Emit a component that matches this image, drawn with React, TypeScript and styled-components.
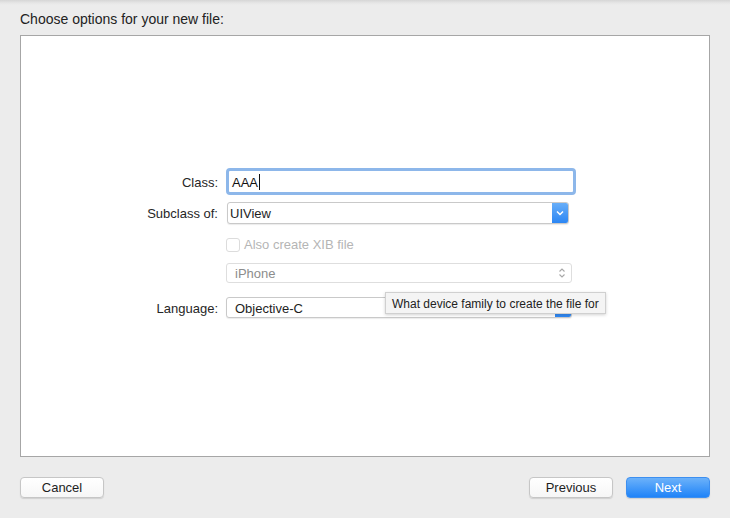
import styled, { createGlobalStyle } from 'styled-components';

const GlobalStyle = createGlobalStyle`
  html, body {
    margin: 0;
    padding: 0;
    background: #ececec;
  }
  body {
    font-family: 'Liberation Sans', Arial, sans-serif;
    font-size: 13px;
    color: #262626;
  }
`;

const Sheet = styled.div`
  width: 730px;
  height: 518px;
  box-sizing: border-box;
  display: flex;
  flex-direction: column;
  background: linear-gradient(#d6d6d6 0, #e6e6e6 3px, #ececec 5px);
  padding: 0 20px;
`;

const Title = styled.div`
  height: 35px;
  line-height: 39px;
  font-size: 14px;
  color: #222;
`;

const Panel = styled.div`
  height: 422px;
  box-sizing: border-box;
  background: #fff;
  border: 1px solid #a6a6a6;
  padding-top: 132px;
`;

const Form = styled.div`
  display: flex;
  flex-direction: column;
`;

const Row = styled.div<{ $top: number; $h: number }>`
  display: grid;
  grid-template-columns: 197px 350px;
  column-gap: 8px;
  align-items: center;
  margin-top: ${(p) => p.$top}px;
  height: ${(p) => p.$h}px;
`;

const Label = styled.div`
  text-align: right;
  font-size: 13px;
  padding-top: 1px;
  color: #262626;
`;

const Control = styled.div`
  position: relative;
  display: flex;
  align-items: center;
  height: 100%;
`;

const FocusField = styled.div`
  width: 350px;
  height: 27px;
  box-sizing: border-box;
  border: 3px solid #8db7ea;
  border-radius: 4px;
  display: flex;
  align-items: center;
  padding: 1px 0 0 3px;
  background: #fff;
  font-size: 13px;
  color: #111;
`;

const Caret = styled.span`
  display: inline-block;
  width: 1px;
  height: 16px;
  margin-left: 1px;
  background: #111;
`;

const Combo = styled.div<{ $w: number; $dim?: boolean; $shift?: number }>`
  width: ${(p) => p.$w}px;
  height: 100%;
  box-sizing: border-box;
  margin-left: ${(p) => p.$shift ?? 0}px;
  display: flex;
  align-items: stretch;
  border: 1px solid ${(p) => (p.$dim ? '#dedede' : '#c9c9c9')};
  border-radius: 3px;
  background: #fff;
  box-shadow: ${(p) => (p.$dim ? 'none' : '0 1px 1px rgba(0,0,0,0.08)')};
  overflow: hidden;
`;

const ComboText = styled.div<{ $pad: number; $dim?: boolean }>`
  flex: 1;
  display: flex;
  align-items: center;
  padding: 1px 0 0 ${(p) => p.$pad}px;
  font-size: 13px;
  color: ${(p) => (p.$dim ? '#8c8c8c' : '#1e1e1e')};
`;

const BlueArrow = styled.div`
  width: 16px;
  display: flex;
  align-items: center;
  justify-content: center;
  background: linear-gradient(#68aef8, #2b86f4);
`;

const Stepper = styled.div`
  width: 18px;
  display: flex;
  align-items: center;
  justify-content: center;
`;

const CheckRow = styled.div`
  display: flex;
  align-items: center;
  gap: 4px;
`;

const CheckBox = styled.div`
  width: 14px;
  height: 14px;
  box-sizing: border-box;
  border: 1px solid #dcdcdc;
  border-radius: 3px;
  background: #fff;
`;

const CheckText = styled.span`
  font-size: 13px;
  color: #b5b5b5;
`;

const Tooltip = styled.div`
  position: absolute;
  left: 159px;
  top: -5px;
  height: 22px;
  box-sizing: border-box;
  padding: 1px 6px 0;
  display: flex;
  align-items: center;
  background: #f4f4f4;
  border: 1px solid #d0d0d0;
  box-shadow: 0 1px 3px rgba(0, 0, 0, 0.18);
  font-size: 12px;
  color: #222;
  white-space: nowrap;
`;

const Footer = styled.div`
  display: flex;
  align-items: center;
  gap: 13px;
  margin-top: 20px;
`;

const Spacer = styled.div`
  flex: 1;
`;

const Button = styled.button<{ $primary?: boolean }>`
  width: 84px;
  height: 21px;
  box-sizing: border-box;
  border-radius: 4px;
  font-family: 'Liberation Sans', Arial, sans-serif;
  font-size: 13px;
  padding: 0;
  cursor: pointer;
  border: 1px solid ${(p) => (p.$primary ? '#3d8ff0' : '#c6c6c6')};
  background: ${(p) =>
    p.$primary ? 'linear-gradient(#6cb2fa, #1f83f8)' : 'linear-gradient(#ffffff, #f6f6f6)'};
  color: ${(p) => (p.$primary ? '#fff' : '#1e1e1e')};
  box-shadow: 0 1px 1px rgba(0, 0, 0, 0.12);
`;

function ChevronDown() {
  return (
    <svg width="8" height="6" viewBox="0 0 8 6">
      <path d="M1 1.5 L4 4.5 L7 1.5" fill="none" stroke="#fff" strokeWidth="1.5" />
    </svg>
  );
}

function UpDown() {
  return (
    <svg width="8" height="12" viewBox="0 0 8 12">
      <path d="M1.5 4.5 L4 2 L6.5 4.5 M1.5 7.5 L4 10 L6.5 7.5" fill="none" stroke="#a8a8a8" strokeWidth="1.1" />
    </svg>
  );
}

export default function App() {
  return (
    <>
      <GlobalStyle />
      <Sheet>
        <Title>Choose options for your new file:</Title>
        <Panel>
          <Form>
            <Row $top={0} $h={27}>
              <Label>Class:</Label>
              <Control>
                <FocusField>
                  AAA
                  <Caret />
                </FocusField>
              </Control>
            </Row>
            <Row $top={7} $h={22}>
              <Label>Subclass of:</Label>
              <Control>
                <Combo $w={342} $shift={1}>
                  <ComboText $pad={2}>UIView</ComboText>
                  <BlueArrow>
                    <ChevronDown />
                  </BlueArrow>
                </Combo>
              </Control>
            </Row>
            <Row $top={13} $h={14}>
              <Label />
              <Control>
                <CheckRow>
                  <CheckBox />
                  <CheckText>Also create XIB file</CheckText>
                </CheckRow>
              </Control>
            </Row>
            <Row $top={12} $h={20}>
              <Label />
              <Control>
                <Combo $w={346} $dim>
                  <ComboText $pad={8} $dim>iPhone</ComboText>
                  <Stepper>
                    <UpDown />
                  </Stepper>
                </Combo>
              </Control>
            </Row>
            <Row $top={14} $h={21}>
              <Label>Language:</Label>
              <Control>
                <Combo $w={346}>
                  <ComboText $pad={8}>Objective-C</ComboText>
                  <BlueArrow>
                    <ChevronDown />
                  </BlueArrow>
                </Combo>
                <Tooltip>What device family to create the file for</Tooltip>
              </Control>
            </Row>
          </Form>
        </Panel>
        <Footer>
          <Button>Cancel</Button>
          <Spacer />
          <Button>Previous</Button>
          <Button $primary>Next</Button>
        </Footer>
      </Sheet>
    </>
  );
}
